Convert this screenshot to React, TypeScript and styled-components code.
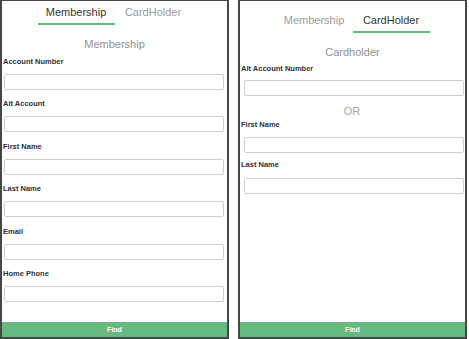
import styled, { createGlobalStyle } from "styled-components";

const GlobalStyle = createGlobalStyle`
  html, body {
    margin: 0;
    padding: 0;
    background: #ffffff;
  }
  body {
    font-family: "Liberation Sans", Arial, sans-serif;
  }
`;

const Screen = styled.div`
  display: flex;
  gap: 9px;
  width: 469px;
  height: 339px;
`;

const Panel = styled.div<{ $offset: number }>`
  display: flex;
  flex-direction: column;
  width: 229px;
  height: 339px;
  box-sizing: border-box;
  border: 2px solid #464646;
  border-top-width: 1px;
  padding-top: ${({ $offset }) => $offset}px;
  background: #fff;
  overflow: hidden;
`;

const Tabs = styled.div`
  display: flex;
  justify-content: center;
`;

const Tab = styled.div<{ $active?: boolean }>`
  width: 77px;
  text-align: center;
  font-size: 11px;
  line-height: 14px;
  padding-bottom: 4px;
  color: ${({ $active }) => ($active ? "#333333" : "#9a9a9a")};
  border-bottom: 2px solid
    ${({ $active }) => ($active ? "#5cbf73" : "transparent")};
`;

const Heading = styled.div`
  margin-top: 12px;
  text-align: center;
  font-size: 11px;
  line-height: 14px;
  color: #8f8f8f;
`;

const Form = styled.div<{ $top: number }>`
  display: flex;
  flex-direction: column;
  padding: ${({ $top }) => $top}px 2px 0 1px;
`;

const Field = styled.div<{ $after?: number }>`
  display: flex;
  flex-direction: column;
  margin-bottom: ${({ $after = 8 }) => $after}px;
`;

const Label = styled.label<{ $gap?: number }>`
  font-size: 7.5px;
  line-height: 10px;
  font-weight: 700;
  color: #2f2f38;
  margin-bottom: ${({ $gap = 7 }) => $gap}px;
`;

const Input = styled.input<{ $shift: number }>`
  box-sizing: border-box;
  height: 16px;
  width: 220px;
  margin: 0 0 0 ${({ $shift }) => $shift}px;
  padding: 0 4px;
  border: 1px solid #cfcfcf;
  border-radius: 2px;
  background: #fff;
  outline: none;
`;

const Or = styled.div`
  margin: 2px 0 2px;
  text-align: center;
  font-size: 11px;
  line-height: 13px;
  color: #a5a5a5;
`;

const Spacer = styled.div`
  flex: 1;
`;

const FindButton = styled.button`
  height: 15px;
  width: 100%;
  border: none;
  margin: 0;
  padding: 0;
  background: #66b97f;
  color: #ffffff;
  font-family: "Liberation Sans", Arial, sans-serif;
  font-size: 7px;
  font-weight: 700;
  line-height: 15px;
`;

const membershipFields = [
  "Account Number",
  "Alt Account",
  "First Name",
  "Last Name",
  "Email",
  "Home Phone",
];

export default function App() {
  return (
    <>
      <GlobalStyle />
      <Screen>
        <Panel $offset={4}>
          <Tabs>
            <Tab $active>Membership</Tab>
            <Tab>CardHolder</Tab>
          </Tabs>
          <Heading>Membership</Heading>
          <Form $top={6}>
            {membershipFields.map((name) => (
              <Field key={name} $after={9.4}>
                <Label>{name}</Label>
                <Input $shift={1} />
              </Field>
            ))}
          </Form>
          <Spacer />
          <FindButton>Find</FindButton>
        </Panel>
        <Panel $offset={12}>
          <Tabs>
            <Tab>Membership</Tab>
            <Tab $active>CardHolder</Tab>
          </Tabs>
          <Heading>Cardholder</Heading>
          <Form $top={5}>
            <Field $after={7}>
              <Label $gap={6}>Alt Account Number</Label>
              <Input $shift={3} />
            </Field>
            <Or>OR</Or>
            <Field $after={7.5}>
              <Label $gap={6.5}>First Name</Label>
              <Input $shift={3} />
            </Field>
            <Field>
              <Label $gap={8}>Last Name</Label>
              <Input $shift={3} />
            </Field>
          </Form>
          <Spacer />
          <FindButton>Find</FindButton>
        </Panel>
      </Screen>
    </>
  );
}
